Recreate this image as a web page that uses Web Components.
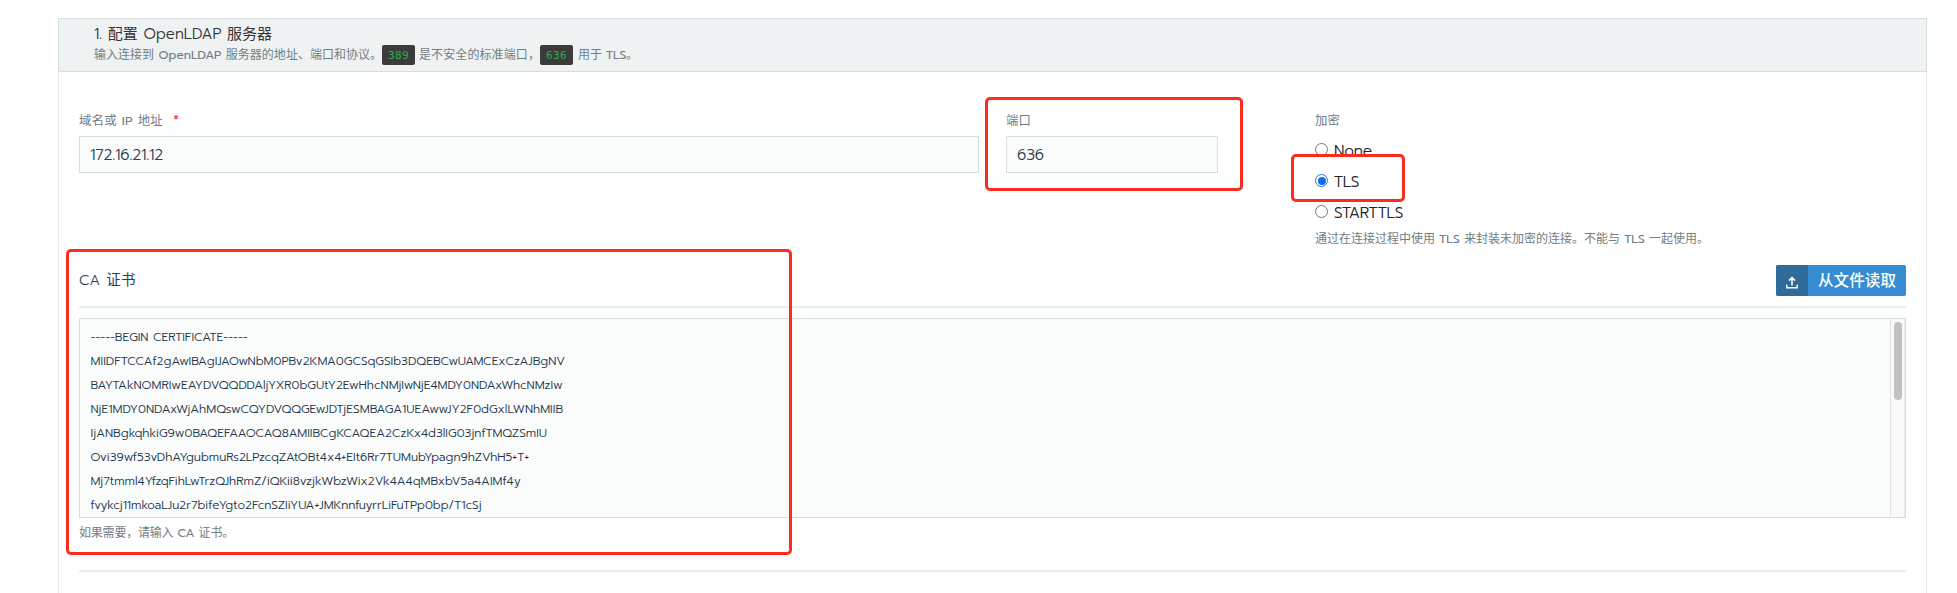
<!DOCTYPE html>
<html lang="zh-CN"><head><meta charset="utf-8"><title>OpenLDAP</title>
<style>
html,body{margin:0;height:593px;overflow:hidden;background:#fff}
body{position:relative;font-family:Prompt,"Noto Sans","Noto Sans CJK SC",sans-serif}
call-out{position:absolute}
</style></head><body>
<ldap-page></ldap-page>
<call-out style="left:985px;top:97px;width:258px;height:94px"></call-out>
<call-out style="left:1291px;top:154px;width:114px;height:48px"></call-out>
<call-out style="left:66px;top:249px;width:726px;height:306px"></call-out>
<script>
function define(name, html, init){
  customElements.define(name, class extends HTMLElement{
    constructor(){
      super();
      const t=document.createElement('template');
      t.innerHTML=html;
      this.attachShadow({mode:'open'}).append(t.content.cloneNode(true));
    }
    connectedCallback(){ if(init) init(this); }
  });
}
define('call-out',`<style>:host{display:block;box-sizing:border-box;border:3px solid #fb2c1d;border-radius:5px;pointer-events:none}</style>`);

// A single line of text tracked to an exact advance width.
define('tracked-text',`<style>:host{display:inline-block;white-space:pre;flex:none}span{display:inline-block;white-space:pre}::slotted(i){font-style:normal;font-weight:300}</style><span><slot></slot></span>`,el=>{
  const w=parseFloat(el.getAttribute('w'));
  const s=el.shadowRoot.querySelector('span');
  const n=el.textContent.length;
  s.style.letterSpacing=((w-s.getBoundingClientRect().width)/n)+'px';
  el.style.width=w+'px';
});
define('section-head',`<style>
:host{display:block;box-sizing:border-box;height:54px;padding:5px 0 0 35px;background:#eef2f2;border:1px solid #d5dfdf;margin:0 -1px}
.t{height:21px;line-height:20px;font-size:15px;color:#333}
.d{display:flex;align-items:center;height:20px;line-height:20px;font-size:12px;color:#727d84}
</style><div class="t"><slot name="title"></slot></div><div class="d"><slot></slot></div>`);
define('code-chip',`<style>:host{display:flex;align-items:center;justify-content:center;box-sizing:border-box;width:33px;height:20px;background:#3b3b3b;border-radius:2px;color:#27ae55;font:11px "DejaVu Sans Mono",monospace;letter-spacing:.3px}</style><slot></slot>`);
define('form-field',`<style>:host{display:block}
.l{display:flex;height:20px;line-height:20px;font-size:12.4px;color:#727d84}
.b{margin-top:5px}</style><div class="l"><slot name="label"></slot></div><div class="b"><slot></slot></div>`);
define('text-box',`<style>:host{display:flex;align-items:center;box-sizing:border-box;height:37px;padding-left:10px;border:1px solid #d5dfdf;background:#fafcfb;font-size:15.5px;font-weight:300;line-height:22px;color:#2d3e50}</style><slot></slot>`);
define('radio-option',`<style>:host{display:flex;height:31px;align-items:center;font-size:15.5px;font-weight:300;color:#222;line-height:22px}
i{box-sizing:border-box;width:13px;height:13px;border:1px solid #767676;border-radius:50%;margin:0 6px 2px 0;flex:none;display:flex;align-items:center;justify-content:center}
:host([checked]) i{border-color:#1a73f5}
:host([checked]) i::after{content:"";width:8px;height:8px;border-radius:50%;background:#0b6cf8}
</style><i></i><slot></slot>`);
define('icon-button',`<style>:host{display:flex;width:130px;height:31px;border-radius:2px;overflow:hidden;background:#358cd3;color:#fff;font-size:15.5px;line-height:32px;font-weight:500}
.i{width:32px;background:#306b99;display:flex}
svg{margin:11px 0 0 10px}
.x{padding-left:10px}</style><div class="i"><svg width="12" height="13" viewBox="0 0 12 13" fill="none" stroke="#fff" stroke-width="1.5"><path d="M.8 8.7v3.1h10.4V8.7M6 9.4V1.6M3 4.6 6 1.6l3 3"/></svg></div><div class="x"><slot></slot></div>`);
define('text-region',`<style>:host{display:flex;box-sizing:border-box;height:200px;border:1px solid #d5dfdf;background:#fafcfb;overflow:hidden}
.c{flex:1;padding:6px 0 0 10.6px;font-size:12px;font-weight:300;line-height:24px;color:#22344a;display:flex;flex-direction:column;align-items:flex-start}
.s{width:13px;border-left:1px solid #e3e3e3;border-right:1px solid #e8e8e8;background:#f9f9f9;padding-top:3px}
.s i{display:block;width:8px;height:78px;border-radius:4px;background:#c1c1c1;margin-left:3px}
</style><div class="c"><slot></slot></div><div class="s"><i></i></div>`);
define('rule-line',`<style>:host{display:block;height:2px;background:#e8eeed}</style>`);
define('ldap-page',`<style>
:host{display:block;box-sizing:border-box;height:593px;padding:18px 30px 0 58px}
.panel{box-sizing:border-box;height:575px;border:solid #e8eceb;border-width:0 1px}
.in{padding:39px 20px 0}
.row{display:grid;grid-template-columns:900px 239px 1fr;height:154px}
.port{margin-left:27px;width:212px}
.enc{margin-left:97px}
.opts{margin:-1px 0 1px}
.hint{display:flex;height:20px;line-height:20px;font-size:12px;color:#727d84}
.ca{display:flex;justify-content:space-between;height:41px;color:#2d3e50;font-size:14.5px;line-height:30px}
.star{color:#e8453c;font-size:14px;font-weight:500;margin-left:10px}
</style><div class="panel">
<section-head><tracked-text slot="title" w="178"><i>1. </i>配置<i> OpenLDAP </i>服务器</tracked-text>
<tracked-text w="288">输入连接到 OpenLDAP 服务器的地址、端口和协议。</tracked-text><code-chip>389</code-chip><tracked-text w="121" style="margin-left:4px">是不安全的标准端口，</tracked-text><code-chip>636</code-chip><tracked-text w="60" style="margin-left:5px">用于 TLS。</tracked-text></section-head>
<div class="in"><div class="row">
<form-field><tracked-text slot="label" w="84">域名或 IP 地址</tracked-text><span slot="label" class="star">*</span><text-box><tracked-text w="73">172.16.21.12</tracked-text></text-box></form-field>
<form-field class="port"><tracked-text slot="label" w="25">端口</tracked-text><text-box><tracked-text w="27">636</tracked-text></text-box></form-field>
<form-field class="enc"><tracked-text slot="label" w="25">加密</tracked-text><div class="opts">
<radio-option><tracked-text w="38">None</tracked-text></radio-option><radio-option checked><tracked-text w="25">TLS</tracked-text></radio-option><radio-option><tracked-text w="69">STARTTLS</tracked-text></radio-option></div>
<div class="hint"><tracked-text w="394">通过在连接过程中使用 TLS 来封装未加密的连接。不能与 TLS 一起使用。</tracked-text></div></form-field>
</div>
<div class="ca"><tracked-text w="57"><i>CA </i>证书</tracked-text><icon-button><tracked-text w="78">从文件读取</tracked-text></icon-button></div>
<rule-line></rule-line>
<text-region style="margin-top:10px">
<tracked-text w="157">-----BEGIN CERTIFICATE-----</tracked-text>
<tracked-text w="474.5">MIIDFTCCAf2gAwIBAgIJAOwNbM0PBv2KMA0GCSqGSIb3DQEBCwUAMCExCzAJBgNV</tracked-text>
<tracked-text w="472">BAYTAkNOMRIwEAYDVQQDDAljYXR0bGUtY2EwHhcNMjIwNjE4MDY0NDAxWhcNMzIw</tracked-text>
<tracked-text w="472.5">NjE1MDY0NDAxWjAhMQswCQYDVQQGEwJDTjESMBAGA1UEAwwJY2F0dGxlLWNhMIIB</tracked-text>
<tracked-text w="456.5">IjANBgkqhkiG9w0BAQEFAAOCAQ8AMIIBCgKCAQEA2CzKx4d3lIG03jnfTMQZSmIU</tracked-text>
<tracked-text w="438.5">Ovi39wf53vDhAYgubmuRs2LPzcqZAtOBt4x4+EIt6Rr7TUMubYpagn9hZVhH5+T+</tracked-text>
<tracked-text w="430">Mj7tmml4YfzqFihLwTrzQJhRmZ/iQKii8vzjkWbzWix2Vk4A4qMBxbV5a4AIMf4y</tracked-text>
<tracked-text w="391">fvykcj11mkoaLJu2r7bifeYgto2FcnSZIiYUA+JMKnnfuyrrLiFuTPp0bp/T1cSj</tracked-text>
</text-region>
<div class="hint" style="margin-top:5px"><tracked-text w="155">如果需要，请输入 CA 证书。</tracked-text></div>
<rule-line style="margin-top:27px"></rule-line>
</div></div>`);
</script></body></html>
